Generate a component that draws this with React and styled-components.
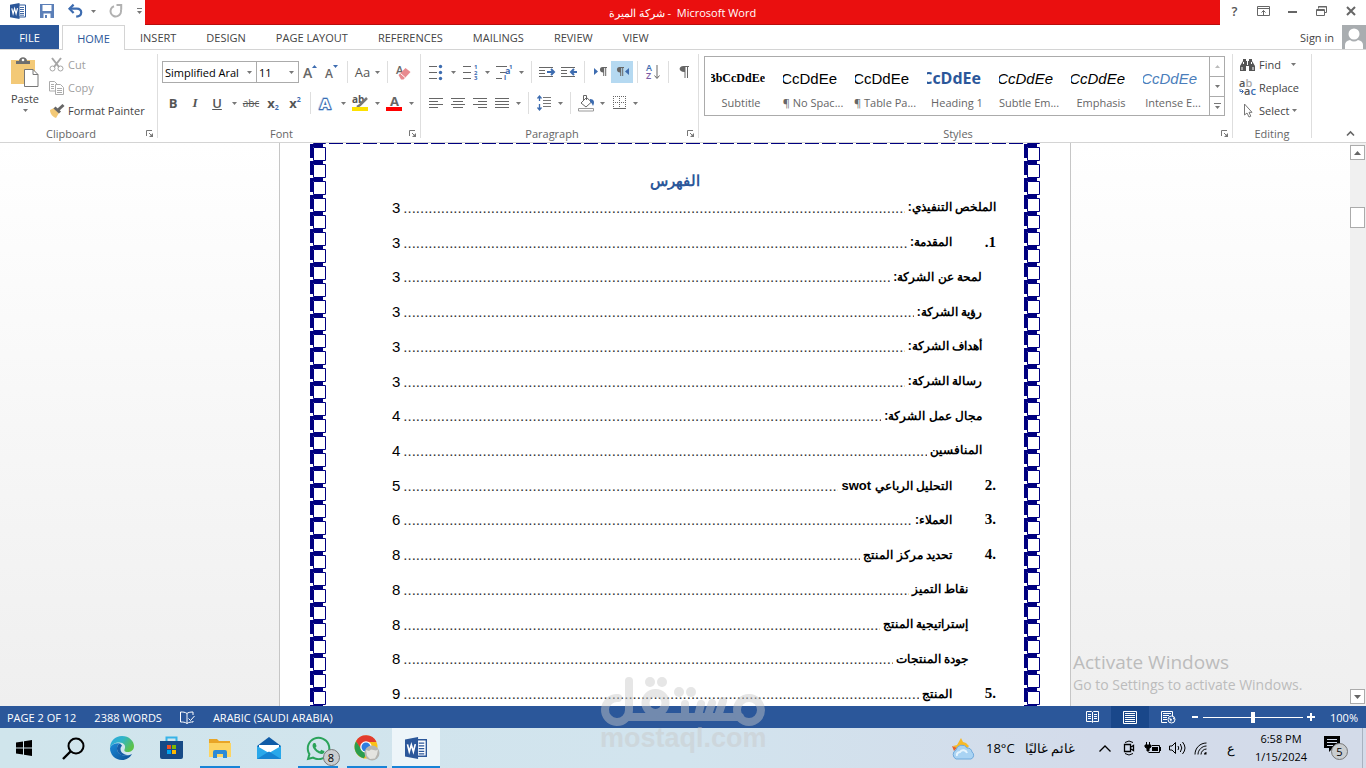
import React from 'react';
import styled, { createGlobalStyle, css } from 'styled-components';
import { FaWhatsapp } from 'react-icons/fa';

const toc = [
  { title: 'الملخص التنفيذي:', page: 3 },
  { num: '1', numDir: 'rtl', title: 'المقدمة:', page: 3 },
  { level: 1, title: 'لمحة عن الشركة:', page: 3 },
  { level: 1, title: 'رؤية الشركة:', page: 3 },
  { level: 1, title: 'أهداف الشركة:', page: 3 },
  { level: 1, title: 'رسالة الشركة:', page: 3 },
  { level: 1, title: 'مجال عمل الشركة:', page: 4 },
  { level: 1, title: 'المنافسين', page: 4 },
  { num: '2', title: 'التحليل الرباعي', latin: 'swot', page: 5 },
  { num: '3', title: 'العملاء:', page: 6 },
  { num: '4', title: 'تحديد مركز المنتج', page: 8 },
  { level: 2, title: 'نقاط التميز', page: 8 },
  { level: 2, title: 'إستراتيجية المنتج', page: 8 },
  { level: 2, title: 'جودة المنتجات', page: 8 },
  { num: '5', title: 'المنتج', page: 9 },
];

const styleList = [
  { name: 'Subtitle', look: 'serif' },
  { name: '¶ No Spac...', look: 'plain' },
  { name: '¶ Table Pa...', look: 'plain' },
  { name: 'Heading 1', look: 'heading' },
  { name: 'Subtle Em...', look: 'italic' },
  { name: 'Emphasis', look: 'italic' },
  { name: 'Intense E...', look: 'intense' },
];

const tabs = ['INSERT', 'DESIGN', 'PAGE LAYOUT', 'REFERENCES', 'MAILINGS', 'REVIEW', 'VIEW'];

const dots = '.'.repeat(160);

/* ---------- icons ---------- */

const Svg = ({ w = 16, h = 16, children, ...rest }) => (
  <svg width={w} height={h} viewBox={`0 0 ${w} ${h}`} fill="none" aria-hidden="true" {...rest}>
    {children}
  </svg>
);

const Down = ({ color = '#777' }) => (
  <Svg w={5} h={3}><path d="M0 0h5L2.5 3z" fill={color} /></Svg>
);

const WordIcon = ({ size = 16 }) => (
  <svg width={size} height={size} viewBox="0 0 16 16" aria-hidden="true">
    <path d="M8 2h7.5v12H8z" fill="#fff" stroke="#2b579a" />
    <path d="M10 4.5h4M10 6.5h4M10 8.5h4M10 10.5h4M10 12.2h4" stroke="#2b579a" strokeWidth=".9" />
    <path d="M0 1.8 9.5 0v16L0 14.2z" fill="#2b579a" />
    <path d="m1.8 5.4 1.3 5.3 1.5-5 1.5 5 1.4-5.5" fill="none" stroke="#fff" strokeWidth="1.2" />
  </svg>
);

const SaveIcon = () => (
  <Svg w={14} h={14}>
    <path d="M0 0h14v14H0z" fill="#5b7fb8" />
    <path d="M2.5 1h9v6h-9zM3.5 9.5h7V14h-7z" fill="#fff" />
    <path d="M5 11h2v3H5z" fill="#5b7fb8" />
  </Svg>
);

const UndoIcon = () => (
  <Svg w={15} h={14}>
    <path d="M1.5 4.7h7.3c6 0 6 7.4-.6 8" stroke="#3d6cb0" strokeWidth="2.2" />
    <path d="M5.6.6 1.5 4.7l4.1 4.2" stroke="#3d6cb0" strokeWidth="2.2" />
  </Svg>
);

const RedoIcon = () => (
  <Svg w={14} h={14}>
    <path d="M5 2.2a5.3 5.3 0 1 0 6.8 3.2" stroke="#b1b1b1" strokeWidth="2" />
    <path d="M7.5 1h4.7v4.8" stroke="#b1b1b1" strokeWidth="2" />
  </Svg>
);

const PasteIcon = () => (
  <Svg w={30} h={32}>
    <path d="M1 4h24v24H1z" fill="#f3c977" />
    <path d="M6 8V5h3c0-5 8-5 8 0h3v3z" fill="#6e6e6e" />
    <circle cx="13" cy="4" r="1.3" fill="#fff" />
    <path d="M14.5 13.5h8.500l5 5v12H14.500z" fill="#fff" stroke="#777" />
    <path d="M23 13.500v5h5" stroke="#777" />
  </Svg>
);

const CutIcon = () => (
  <Svg w={15} h={15}>
    <path d="m3 1 7 9M12 1 5 10" stroke="#a6a6a6" strokeWidth="2" />
    <circle cx="3.500" cy="11.500" r="2.500" stroke="#a6a6a6" />
    <circle cx="11.500" cy="11.500" r="2.500" stroke="#a6a6a6" />
  </Svg>
);

const CopyIcon = () => (
  <Svg w={15} h={14}>
    <path d="M.5.5h5l2.500 2.500v7H.5z" fill="#fff" stroke="#ababab" />
    <path d="M6.500 3.500h5l3 3v7h-8z" fill="#fff" stroke="#ababab" />
    <path d="M2 3.500h3M2 5.500h3M2 7.500h3M8 7.500h5M8 9.500h5M8 11.500h5" stroke="#ababab" />
  </Svg>
);

const BrushIcon = () => (
  <Svg w={16} h={14}>
    <path d="m1 6 4-2 5 5-3 5C4 13 1 10 1 6z" fill="#f3c977" />
    <path d="m5.500 3.500 5.500 5" stroke="#666" strokeWidth="3" />
    <path d="m9 6 5.500-5" stroke="#666" strokeWidth="3" />
  </Svg>
);

const GrowIcon = ({ shrink }) => (
  <Svg w={16} h={16}>
    <text x="1" y="14" fontFamily="Open Sans" fontSize={shrink ? 12 : 14} fontWeight="600" fill="#666">A</text>
    <path d={shrink ? 'M9 1h5l-2.500 3z' : 'M10 4h5l-2.500-3z'} fill="#3d6cb0" />
  </Svg>
);

const EraserIcon = () => (
  <Svg w={16} h={16}>
    <text x="1" y="10" fontFamily="Open Sans" fontSize="11" fontWeight="600" fill="#666">A</text>
    <path d="m3.500 11 7-7 5 4-7 7.500H6z" fill="#e88a8f" />
    <path d="m5.500 9.500 4.500 4" stroke="#fff" />
  </Svg>
);

const OutlineA = () => (
  <Svg w={16} h={16}>
    <text x="2" y="14" fontFamily="Open Sans" fontSize="15" fontWeight="600" fill="#9fc0e6" stroke="#bcd5f0" strokeWidth="4" strokeLinejoin="round">A</text>
    <text x="2" y="14" fontFamily="Open Sans" fontSize="15" fontWeight="700" fill="#fff" stroke="#3d6cb0" strokeWidth="2" paintOrder="stroke">A</text>
  </Svg>
);

const HighlightIcon = () => (
  <Svg w={17} h={17}>
    <text x="0" y="8" fontFamily="Open Sans" fontSize="10" fontWeight="700" fill="#555">ab</text>
    <path d="m15 3-7 7-3 2" stroke="#777" strokeWidth="2.500" />
    <path d="M0 12h16v4H0z" fill="#fde100" />
  </Svg>
);

const FontColorIcon = () => (
  <Svg w={16} h={17}>
    <text x="4" y="11" fontFamily="Open Sans" fontSize="13" fontWeight="700" fill="#666">A</text>
    <path d="M0 12h16v4H0z" fill="#f00" />
  </Svg>
);

const ListIcon = ({ kind }) => (
  <Svg w={16} h={16}>
    {kind === 'levels' ? (
      <path d="M0 2.500h11M4 8.500h6M0 14.500h6" stroke="#666" />
    ) : (
      <path d="M1 2.500h8M1 8.500h8M1 14.500h8" stroke="#666" />
    )}
    {kind === 'bullets' && (
      <g fill="#3d6cb0">
        <circle cx="12.500" cy="2.500" r="1.700" /><circle cx="12.500" cy="8.500" r="1.700" /><circle cx="12.500" cy="14.500" r="1.700" />
      </g>
    )}
    {kind === 'numbers' && (
      <g fontFamily="Open Sans" fontSize="6" fontWeight="700" fill="#3d6cb0">
        <text x="12" y="5">1</text><text x="12" y="11">2</text><text x="12" y="16">3</text>
      </g>
    )}
    {kind === 'levels' && (
      <g fontFamily="Open Sans" fontWeight="700" fill="#3d6cb0">
        <text x="13" y="5" fontSize="6">1</text><text x="9" y="10" fontSize="9">a</text><text x="8" y="16" fontSize="7">i</text>
      </g>
    )}
  </Svg>
);

const IndentIcon = ({ left }) => (
  <Svg w={16} h={12}>
    <path d="M0 1.500h14M0 4.500h6M0 7.500h6M0 10.500h14" stroke="#666" />
    <path d={left ? 'M16 6h-6m3-3-3 3 3 3' : 'M8 6h7m-3-3 3 3-3 3'} stroke="#3d6cb0" strokeWidth="2" />
  </Svg>
);

const DirIcon = ({ rtl }) => (
  <Svg w={13} h={10}>
    <path d={rtl ? 'M13 1v7L9 4.500z' : 'M0 1v7l4-3.500z'} fill="#3d6cb0" />
    <g transform={rtl ? 'translate(-5 0)' : ''}>
      <path d="M8.500 0H13v1h-.8v8h-1V1h-1v8h-1V5.500C5 5.500 5 0 8.500 0z" fill="#666" />
    </g>
  </Svg>
);

const SortIcon = () => (
  <Svg w={14} h={16}>
    <g fontFamily="Open Sans" fontSize="9" fontWeight="600">
      <text x="0" y="7" fill="#3d6cb0">A</text>
      <text x="0" y="15" fill="#7a5ba5">Z</text>
    </g>
    <path d="M11 1v13M8.500 11.500 11 14.500l2.500-3" stroke="#666" />
  </Svg>
);

const PilcrowIcon = () => (
  <Svg w={10} h={12}>
    <path d="M4.500 0H10v1H9v11H8V1H6.500v11h-1V6C-.8 6-.8 0 4.500 0z" fill="#666" />
  </Svg>
);

const alignPaths = {
  left: 'M0 .5h14M0 3.500h9M0 6.500h14M0 9.500h9',
  center: 'M0 .5h14M2 3.500h10M0 6.500h14M2 9.500h10',
  right: 'M0 .5h14M5 3.500h9M0 6.500h14M5 9.500h9',
  justify: 'M0 .5h14M0 3.500h14M0 6.500h14M0 9.500h14',
};

const AlignIcon = ({ kind }) => (
  <Svg w={14} h={10}><path d={alignPaths[kind]} stroke="#666" /></Svg>
);

const SpacingIcon = () => (
  <Svg w={15} h={16}>
    <path d="M6 2.500h8M6 5.500h8M6 8.500h8M6 11.500h8" stroke="#777" />
    <path d="M2.500 1v5M.5 3.500l2-2.500 2 2.500M2.500 9v6M.5 12.500l2 2.500 2-2.500" stroke="#3d6cb0" strokeWidth="1.300" />
  </Svg>
);

const ShadingIcon = () => (
  <Svg w={17} h={17}>
    <path d="M3 8 8.500 2.500l5 4.500L8 12z" fill="#fff" stroke="#666" />
    <path d="M5.500 6V.5h3V5" stroke="#666" />
    <path d="M12 4c4 0 5 3 3 7-1-2-1-3-3-4z" fill="#3d6cb0" />
    <path d="M.5 13.500h15v2.500H.5z" fill="#fff" stroke="#999" />
  </Svg>
);

const BordersIcon = () => (
  <Svg w={13} h={14}>
    <path d="M.5 0v12M12.500 0v12M6.500 0v12M0 .5h13M0 6.500h13" stroke="#666" strokeDasharray="1 1" />
    <path d="M0 12.500h13" stroke="#666" />
  </Svg>
);

const LauncherIcon = () => (
  <Svg w={7} h={7}>
    <path d="M.5 6V.5H6" stroke="#777" />
    <path d="m3 3 3 3" stroke="#777" />
    <path d="M7 3v4H3z" fill="#777" />
  </Svg>
);

const FindIcon = () => (
  <Svg w={15} h={14}>
    <path d="M3 1h3v2h3V1h3v2l3 5v5H9V8H6v5H0V8l3-5z" fill="#555" />
    <path d="M3.500 4v2M11.500 4v2M2 9v3M13 9v3M7.500 3v4" stroke="#fff" />
  </Svg>
);

const ReplaceIcon = () => (
  <Svg w={17} h={16}>
    <g fontFamily="Open Sans" fontSize="11" fontWeight="600">
      <text x="0" y="7" fill="#555">a<tspan fill="#aaa">b</tspan></text>
      <text x="5" y="15" fill="#555">a<tspan fill="#3d6cb0">c</tspan></text>
    </g>
    <path d="M1 9v2.500h3m-1.500-2 2 2-2 2" stroke="#3d6cb0" />
  </Svg>
);

const SelectIcon = () => (
  <Svg w={10} h={15}>
    <path d="M1.500 1v11l2.500-2 2 4 1.800-.8L6 9.300h3z" fill="#fff" stroke="#777" />
  </Svg>
);

/* ---------- application ---------- */

const Border = () => (
  <BorderStrip aria-hidden="true">
    <defs>
      <pattern id="film" width="16" height="17" patternUnits="userSpaceOnUse" y="1">
        <path d="M0 0h13v3H3v11H0z" fill="#000080" />
        <path d="M3.500 3.500h12v13h-12z" fill="#fff" stroke="#000080" />
      </pattern>
    </defs>
    <rect width="16" height="100%" fill="url(#film)" />
  </BorderStrip>
);

const TitleBar = () => (
  <StTitleBar>
    <QuickAccess>
      <ToolBtn $w={28} aria-label="Word"><WordIcon /></ToolBtn>
      <ToolBtn $w={30} aria-label="Save"><SaveIcon /></ToolBtn>
      <ToolBtn $w={26} aria-label="Undo"><UndoIcon /></ToolBtn>
      <ToolBtn $w={10} aria-label="Undo list"><Down /></ToolBtn>
      <ToolBtn $w={36} aria-label="Redo"><RedoIcon /></ToolBtn>
      <ToolBtn $w={11} aria-label="Customize toolbar">
        <Svg w={5} h={6}><path d="M0 .5h5" stroke="#777" /><path d="M0 3h5L2.500 6z" fill="#777" /></Svg>
      </ToolBtn>
    </QuickAccess>
    <DocTitle><bdi>شركة الميرة</bdi> -&nbsp; Microsoft Word</DocTitle>
    <WindowButtons>
      <ToolBtn $w={29} $mark aria-label="Help">?</ToolBtn>
      <ToolBtn $w={29} aria-label="Ribbon display">
        <Svg w={13} h={11}>
          <path d="M.5.5h12v9H.5zM.5 2.500h12" stroke="#666" />
          <path d="M6.500 9V4.500m-2 2 2-2 2 2" stroke="#666" />
        </Svg>
      </ToolBtn>
      <ToolBtn $w={29} aria-label="Minimize"><Svg w={9} h={4}><path d="M0 3h9" stroke="#666" strokeWidth="2" /></Svg></ToolBtn>
      <ToolBtn $w={29} aria-label="Restore">
        <Svg w={11} h={10}>
          <path d="M2.500 2.500v-2h8v6h-2M2 1h9" stroke="#666" />
          <path d="M.5 3.500h8v6h-8zM0 4.500h9" stroke="#666" />
        </Svg>
      </ToolBtn>
      <ToolBtn $w={29} aria-label="Close"><Svg w={10} h={10}><path d="m1 1 8 8m0-8L1 9" stroke="#666" strokeWidth="2" /></Svg></ToolBtn>
    </WindowButtons>
  </StTitleBar>
);

const ClipboardGroup = () => (
  <Group $w={157}>
    <ClipboardBody>
      <PasteBtn><PasteIcon />Paste<Down /></PasteBtn>
      <CommandList>
        <CommandBtn disabled><IconSlot><CutIcon /></IconSlot>Cut</CommandBtn>
        <CommandBtn disabled><IconSlot><CopyIcon /></IconSlot>Copy</CommandBtn>
        <CommandBtn><IconSlot><BrushIcon /></IconSlot>Format Painter</CommandBtn>
      </CommandList>
    </ClipboardBody>
    <GroupFoot name="Clipboard" />
  </Group>
);

const GroupFoot = ({ name, plain }) => (
  <GroupLabel>
    <span>{name}</span>
    {!plain && <Launcher aria-label={`${name} settings`}><LauncherIcon /></Launcher>}
  </GroupLabel>
);

const FontGroup = () => (
  <Group $w={262}>
    <ToolRows>
      <ToolRow>
        <Combo $w={95}>
          <select aria-label="Font"><option>Simplified Aral</option></select>
          <Down />
        </Combo>
        <Combo $w={43} $joined>
          <select aria-label="Font size"><option>11</option></select>
          <Down />
        </Combo>
        <ToolBtn aria-label="Grow font"><GrowIcon /></ToolBtn>
        <ToolBtn aria-label="Shrink font"><GrowIcon shrink /></ToolBtn>
        <Sep />
        <ToolBtn $w={31} $case aria-label="Change case">Aa<Down /></ToolBtn>
        <Sep />
        <ToolBtn aria-label="Clear formatting"><EraserIcon /></ToolBtn>
      </ToolRow>
      <ToolRow>
        <ToolBtn aria-label="Bold"><b>B</b></ToolBtn>
        <ToolBtn $serif aria-label="Italic"><i>I</i></ToolBtn>
        <ToolBtn $mark aria-label="Underline"><u>U</u></ToolBtn>
        <ToolBtn $w={12} aria-label="Underline style"><Down /></ToolBtn>
        <ToolBtn $small aria-label="Strikethrough"><s>abc</s></ToolBtn>
        <ToolBtn aria-label="Subscript"><b>x</b><sub>2</sub></ToolBtn>
        <ToolBtn aria-label="Superscript"><b>x</b><sup>2</sup></ToolBtn>
        <Sep />
        <ToolBtn aria-label="Text effects"><OutlineA /></ToolBtn>
        <ToolBtn $w={12} aria-label="Text effects list"><Down /></ToolBtn>
        <ToolBtn aria-label="Highlight"><HighlightIcon /></ToolBtn>
        <ToolBtn $w={12} aria-label="Highlight colors"><Down /></ToolBtn>
        <ToolBtn aria-label="Font color"><FontColorIcon /></ToolBtn>
        <ToolBtn $w={12} aria-label="Font colors"><Down /></ToolBtn>
      </ToolRow>
    </ToolRows>
    <GroupFoot name="Font" />
  </Group>
);

const ParagraphGroup = () => (
  <Group $w={277}>
    <ToolRows>
      <ToolRow>
        <ToolBtn aria-label="Bullets"><ListIcon kind="bullets" /></ToolBtn>
        <ToolBtn $w={12} aria-label="Bullet library"><Down /></ToolBtn>
        <ToolBtn aria-label="Numbering"><ListIcon kind="numbers" /></ToolBtn>
        <ToolBtn $w={12} aria-label="Numbering library"><Down /></ToolBtn>
        <ToolBtn aria-label="Multilevel list"><ListIcon kind="levels" /></ToolBtn>
        <ToolBtn $w={12} aria-label="List library"><Down /></ToolBtn>
        <Sep />
        <ToolBtn aria-label="Decrease indent"><IndentIcon /></ToolBtn>
        <ToolBtn aria-label="Increase indent"><IndentIcon left /></ToolBtn>
        <Sep />
        <ToolBtn aria-label="Left to right"><DirIcon /></ToolBtn>
        <ToolBtn $on aria-label="Right to left"><DirIcon rtl /></ToolBtn>
        <Sep />
        <ToolBtn aria-label="Sort"><SortIcon /></ToolBtn>
        <Sep />
        <ToolBtn aria-label="Show marks"><PilcrowIcon /></ToolBtn>
      </ToolRow>
      <ToolRow>
        <ToolBtn aria-label="Align left"><AlignIcon kind="left" /></ToolBtn>
        <ToolBtn aria-label="Center"><AlignIcon kind="center" /></ToolBtn>
        <ToolBtn aria-label="Align right"><AlignIcon kind="right" /></ToolBtn>
        <ToolBtn aria-label="Justify"><AlignIcon kind="justify" /></ToolBtn>
        <ToolBtn $w={11} aria-label="Justify list"><Down /></ToolBtn>
        <Sep />
        <ToolBtn aria-label="Line spacing"><SpacingIcon /></ToolBtn>
        <ToolBtn $w={11} aria-label="Line spacing list"><Down /></ToolBtn>
        <Sep />
        <ToolBtn aria-label="Shading"><ShadingIcon /></ToolBtn>
        <ToolBtn $w={11} aria-label="Shading colors"><Down /></ToolBtn>
        <ToolBtn aria-label="Borders"><BordersIcon /></ToolBtn>
        <ToolBtn $w={11} aria-label="Borders list"><Down /></ToolBtn>
      </ToolRow>
    </ToolRows>
    <GroupFoot name="Paragraph" />
  </Group>
);

const StylesGroup = () => (
  <Group>
    <Gallery>
      {styleList.map((s) => (
        <StyleItem key={s.name}>
          <Preview $look={s.look}><span>{s.look === 'serif' ? 'BbCcDdEe' : 'CcDdEe'}</span></Preview>
          <StyleName>{s.name}</StyleName>
        </StyleItem>
      ))}
      <GalleryNav>
        <button aria-label="Previous styles"><Svg w={5} h={3}><path d="M0 3h5L2.500 0z" fill="#bbb" /></Svg></button>
        <button aria-label="Next styles"><Down /></button>
        <button aria-label="More styles">
          <Svg w={7} h={6}><path d="M0 .5h7" stroke="#777" /><path d="M1 3h5L3.500 6z" fill="#777" /></Svg>
        </button>
      </GalleryNav>
    </Gallery>
    <GroupFoot name="Styles" />
  </Group>
);

const EditingGroup = () => (
  <Group $w={78}>
    <CommandList>
      <CommandBtn><IconSlot><FindIcon /></IconSlot>Find<FindCaret><Down /></FindCaret></CommandBtn>
      <CommandBtn><IconSlot><ReplaceIcon /></IconSlot>Replace</CommandBtn>
      <CommandBtn><IconSlot><SelectIcon /></IconSlot>Select<Down /></CommandBtn>
    </CommandList>
    <GroupFoot name="Editing" plain />
  </Group>
);

const Document = () => (
  <Workspace>
    <Canvas>
      <Page>
        <Border />
        <Sheet>
          <TocHeading>الفهرس</TocHeading>
          <TocList>
            {toc.map((row) => (
              <TocRow key={row.title} href="#toc" $level={row.level}>
                {row.num && <TocNum dir={row.numDir || 'ltr'}>{row.num}.</TocNum>}
                <TocTitle>{row.title}{row.latin && <Latin> {row.latin}</Latin>}</TocTitle>
                <Leader aria-hidden="true">{dots}</Leader>
                <PageNum>{row.page}</PageNum>
              </TocRow>
            ))}
          </TocList>
        </Sheet>
        <Border />
      </Page>
    </Canvas>
    <Scrollbar>
      <ScrollBtn aria-label="Scroll up"><Svg w={7} h={4}><path d="M0 4h7L3.500 0z" fill="#666" /></Svg></ScrollBtn>
      <Thumb />
      <ScrollBtn aria-label="Scroll down"><Svg w={7} h={4}><path d="M0 0h7L3.500 4z" fill="#666" /></Svg></ScrollBtn>
    </Scrollbar>
  </Workspace>
);

const StatusBar = () => (
  <StStatus>
    <span>PAGE 2 OF 12</span>
    <span>2388 WORDS</span>
    <Svg w={15} h={13}>
      <path d="M7 2.500C5 1 3 1 .5 1v10c2.500 0 4.500 0 6.500 1.500V2.500zm0 0C8 1.500 10 1 13 1v3M7 12.500c2-1.500 4-1.500 6-1.500v-1" stroke="#fff" />
      <path d="m8.500 7.500 2 2 4-4.500" stroke="#fff" />
    </Svg>
    <span>ARABIC (SAUDI ARABIA)</span>
    <ViewTools>
      <ViewBtn aria-label="Read mode">
        <Svg w={13} h={12}>
          <path d="M.5.5h5l1 1 1-1h5v10h-5l-1 1-1-1h-5zM6.500 1v10" stroke="#fff" />
          <path d="M2 3.500h3M2 5.500h3M2 7.500h3M8 3.500h3M8 5.500h3M8 7.500h3" stroke="#fff" />
        </Svg>
      </ViewBtn>
      <ViewBtn $on aria-label="Print layout">
        <Svg w={14} h={13}>
          <path d="M.5.5h13v12H.5zM2 2.500h10M2 4.500h10M2 6.500h10M2 8.500h10M2 10.500h10" stroke="#fff" />
        </Svg>
      </ViewBtn>
      <ViewBtn aria-label="Web layout">
        <Svg w={15} h={13}>
          <path d="M11.500 5V.5H.5v11H6M2 2.500h8M2 4.500h6M2 6.500h4M2 8.500h4" stroke="#fff" />
          <circle cx="10.500" cy="8.500" r="3.500" fill="#2b579a" stroke="#fff" />
          <path d="m8 7 3 1-1 3zM12 6l2 3-2-1z" fill="#fff" />
        </Svg>
      </ViewBtn>
      <ZoomBtn aria-label="Zoom out"><Svg w={6} h={2}><path d="M0 1h6" stroke="#fff" strokeWidth="2" /></Svg></ZoomBtn>
      <ZoomRange type="range" aria-label="Zoom" defaultValue="50" />
      <ZoomBtn aria-label="Zoom in"><Svg w={8} h={8}><path d="M0 4h8M4 0v8" stroke="#fff" strokeWidth="2" /></Svg></ZoomBtn>
      <ZoomValue>100%</ZoomValue>
    </ViewTools>
  </StStatus>
);

const Taskbar = () => (
  <StTaskbar>
    <TaskBtn aria-label="Start">
      <Svg w={16} h={16}><path d="M0 2.500 7 1.500V7.500H0zM8 1.300 16 0v7.500H8zM0 8.500h7v6L0 13.500zM8 8.500h8V16l-8-1.300z" fill="#000" /></Svg>
    </TaskBtn>
    <TaskBtn aria-label="Search">
      <Svg w={23} h={23}><circle cx="14" cy="9" r="7.500" stroke="#000" strokeWidth="2" /><path d="m8.500 14.500-7.500 7.500" stroke="#000" strokeWidth="2.400" /></Svg>
    </TaskBtn>
    <TaskBtn aria-label="Edge">
      <Svg w={24} h={24}>
        <defs>
          <linearGradient id="edgeTop" x1="0" y1="0" x2="1" y2=".5"><stop offset="0" stopColor="#2aa7e0" /><stop offset=".5" stopColor="#31b4c8" /><stop offset="1" stopColor="#5cc24a" /></linearGradient>
          <linearGradient id="edgeLow" x1="0" y1="0" x2="1" y2="1"><stop offset="0" stopColor="#1b8ad8" /><stop offset="1" stopColor="#0c4f94" /></linearGradient>
        </defs>
        <path d="M0 12C0 5 5 0 12 0s12 5 12 10c0 4-3 6-6.500 6-3 0-3.500-1.500-3-2.500 2-4-1-7-5-7C5 6.500 1.500 8.500 0 12z" fill="url(#edgeTop)" />
        <path d="M0 12c1.500-4 6-5.500 10-4.500C7 9 6.500 12 7.500 15c1.500 4.500 8 6 14.500 3-2 3.500-5.500 6-10 6C5 24 0 18.500 0 12z" fill="url(#edgeLow)" />
        <path d="M10 7.500C7 9 6.500 12 7.500 15c1.200 3.800 6 5.500 11 4.300-3.500-.3-8-2.300-8-6.300 0-2 1-2.500 1.500-3.500z" fill="#155ea8" />
      </Svg>
    </TaskBtn>
    <TaskBtn aria-label="Store">
      <Svg w={23} h={24}>
        <path d="M6.500 6V1.500h10V6" stroke="#37b3e8" strokeWidth="2" />
        <path d="M0 5h23v16q0 2-2 2H2q-2 0-2-2z" fill="#174a86" />
        <path d="M7 9h4v4H7z" fill="#f25022" /><path d="M12 9h4v4h-4z" fill="#7fba00" />
        <path d="M7 14h4v4H7z" fill="#00a4ef" /><path d="M12 14h4v4h-4z" fill="#ffb900" />
      </Svg>
    </TaskBtn>
    <TaskBtn $open aria-label="File Explorer">
      <Svg w={22} h={21}>
        <path d="M0 1h8l2 2h11v4H0z" fill="#e8a526" />
        <path d="M0 5h22v14H0z" fill="#fcd462" />
        <path d="M4 20v-6q0-2 2-2h10q2 0 2 2v6h-4v-4H8v4z" fill="#2c8ad6" />
      </Svg>
    </TaskBtn>
    <TaskBtn aria-label="Mail">
      <Svg w={24} h={23}>
        <path d="M0 9 12 0l12 9v2H0z" fill="#0f5ba7" />
        <path d="M2 8h20v9H2z" fill="#fff" />
        <path d="M0 9v13h24V9l-12 7z" fill="#29a8ea" />
        <path d="M0 22 12 14.500 24 22z" fill="#1684d2" />
      </Svg>
    </TaskBtn>
    <TaskBtn $open aria-label="WhatsApp">
      <AppIcon><FaWhatsapp size={27} color="#2ba35a" /><Badge>8</Badge></AppIcon>
    </TaskBtn>
    <TaskBtn $open aria-label="Chrome">
      <Svg w={26} h={26}>
        <circle cx="12" cy="12" r="11.500" fill="#fbc116" />
        <path d="M2 6.300A11.500 11.500 0 0 1 22.500 7H12L7 14.500z" fill="#e23b2e" />
        <path d="M2 6.300 8.500 16 13 17l-3 6.300A11.500 11.500 0 0 1 2 6.300z" fill="#2a9d4e" />
        <circle cx="12" cy="12" r="5.800" fill="#fff" />
        <circle cx="12" cy="12" r="4.500" fill="#2f7de1" />
        <circle cx="18" cy="18" r="7.500" fill="#b5b5b1" />
        <path d="m12 15 3 1 2-1.500 5 1 2-1-1 5-2 4-5 .5-3-3z" fill="#e4e4e0" />
      </Svg>
    </TaskBtn>
    <TaskBtn $open $active aria-label="Word"><WordIcon size={22} /></TaskBtn>
    <Tray>
      <Weather>
        <Svg w={25} h={23}>
          <path d="m10 1 2 4 3 1 3 3-4 5-7-1-5-4 4-1z" fill="#f6b928" />
          <path d="m1 9 5 2-3 3z" fill="#e8622c" />
          <path d="M5 22a5 5 0 0 1 0-9 6 6 0 0 1 11-2 5 5 0 0 1 5 4 4 4 0 0 1-1 7z" fill="#a9d3f3" stroke="#6fa9dc" />
          <path d="M6 19c-1-3 2-4 3-4 2-3 6-2 7 1" stroke="#e6f4fd" strokeWidth="2" />
        </Svg>
        <span>18°C</span>
        <span dir="rtl">غائم غاليًا</span>
      </Weather>
      <TrayBtn $w={26} aria-label="Hidden icons"><Svg w={12} h={7}><path d="m.5 6.500 5.500-5.500 5.500 5.500" stroke="#000" strokeWidth="1.300" /></Svg></TrayBtn>
      <TrayBtn $w={22} aria-label="Meet now">
        <Svg w={12} h={16}>
          <path d="M1.500 4.500h6v7h-6zM8 7l2.500-1.500v5L8 9" stroke="#000" strokeWidth="1.300" />
          <path d="M2 2.500q4-3 8 0M2 13.500q4 3 8 0" stroke="#000" />
        </Svg>
      </TrayBtn>
      <TrayBtn $w={25} aria-label="Battery">
        <Svg w={16} h={12}>
          <path d="M1.500 0v3M4.500 0v3M0 3h6v2L4 6.500V9H2V6.500L0 5z" stroke="#000" fill="#000" />
          <path d="M7 3.500h7.500v7h-11" stroke="#000" /><path d="M7 5h6v4H7z" fill="#000" /><path d="M15 5v4" stroke="#000" strokeWidth="2" />
        </Svg>
      </TrayBtn>
      <TrayBtn $w={25} aria-label="Volume">
        <Svg w={17} h={14}>
          <path d="M.5 5v4h2.500l3.500 3.500V1.500L3 5z" stroke="#000" />
          <path d="M9 5q1.500 2 0 4M11.300 3q3 4 0 8M13.500 1q5 6 0 12" stroke="#000" />
        </Svg>
      </TrayBtn>
      <TrayBtn $w={20} aria-label="Network">
        <Svg w={13} h={13}>
          <path d="M1 12.500C1 6 6 1 12.500 1M4 12.500C4 8 8 4 12.500 4M7 12.500C7 9.500 9.500 7 12.500 7" stroke="#000" />
          <path d="M10 12.500q0-2.500 2.500-2.500v2.500z" fill="#000" />
        </Svg>
      </TrayBtn>
      <TrayBtn $w={42} aria-label="Keyboard language">ع</TrayBtn>
      <Clock><time>6:58 PM</time><time>1/15/2024</time></Clock>
      <TrayBtn $w={52} aria-label="Notifications">
        <Note>
          <Svg w={24} h={24}>
            <path d="M0 0h16v12H9l-4 4v-4H0z" fill="#000" />
            <path d="M3 3.500h10M3 6.500h10M3 9.500h6" stroke="#d3dcec" />
          </Svg>
          <Badge>5</Badge>
        </Note>
      </TrayBtn>
      <ShowDesktop aria-label="Show desktop" />
    </Tray>
  </StTaskbar>
);

const Watermark = () => (
  <StWatermark>
    <svg width="166" height="50" viewBox="600 676 166 50" fill="none" stroke="#c8c8c8" strokeWidth="8" strokeLinecap="round" aria-hidden="true">
      <path d="M618 698a12 12 0 1 0 11 12V681M627 717h113" />
      <circle cx="655.500" cy="703" r="10" />
      <circle cx="749" cy="710" r="12" />
      <path d="M685 704v12M701 704l-3 12M712 703l-4 12M723 701l-5 15" />
      <g fill="#c8c8c8" stroke="none">
        <circle cx="650" cy="682" r="5" /><circle cx="662" cy="682" r="5" />
        <circle cx="679" cy="692" r="5" /><circle cx="691" cy="692" r="5" />
      </g>
    </svg>
    <span>mostaql.com</span>
  </StWatermark>
);

const App = () => {
  return (
    <>
      <GlobalStyle />
      <Window>
        <TitleBar />
        <TabBar>
          <FileTab>FILE</FileTab>
          <Tab $active>HOME</Tab>
          {tabs.map((tab) => <Tab key={tab}>{tab}</Tab>)}
          <SignIn href="#signin">
            Sign in
            <Svg w={24} h={24}>
              <path d="M0 0h24v24H0z" fill="#a9adb0" />
              <circle cx="12" cy="9" r="5.500" fill="#fff" />
              <path d="M3 24v-4q0-4 5-5 4 3 8 0 5 1 5 5v4z" fill="#fff" />
            </Svg>
          </SignIn>
        </TabBar>
        <Ribbon>
          <ClipboardGroup />
          <GroupLine />
          <FontGroup />
          <GroupLine />
          <ParagraphGroup />
          <GroupLine />
          <StylesGroup />
          <GroupLine />
          <EditingGroup />
          <GroupLine />
          <RibbonEnd>
            <Launcher aria-label="Collapse ribbon"><Svg w={9} h={5}><path d="m1 4.500 3.500-3.500L8 4.500" stroke="#666" strokeWidth="1.600" /></Svg></Launcher>
          </RibbonEnd>
        </Ribbon>
        <Document />
        <StatusBar />
        <Taskbar />
        <Activate>
          <h2>Activate Windows</h2>
          <p>Go to Settings to activate Windows.</p>
        </Activate>
        <Watermark />
      </Window>
    </>
  );
};

export default App;

const GlobalStyle = createGlobalStyle`
  * {
    box-sizing: border-box;
  }
  body {
    margin: 0;
    font-family: "Open Sans", "Liberation Sans", sans-serif;
    font-size: 11px;
    color: #444;
  }
  button, select, input {
    font: inherit;
    color: inherit;
    border: none;
    background: none;
    padding: 0;
    margin: 0;
  }
  a {
    color: inherit;
    text-decoration: none;
  }
  svg {
    display: block;
    flex: none;
    overflow: visible;
  }
`
const Window = styled.div`
  position: relative;
  display: flex;
  flex-direction: column;
  height: 100vh;
  overflow: hidden;
  background: #fff;
`
const StTitleBar = styled.header`
  display: flex;
  flex: none;
  height: 25px;
`
const QuickAccess = styled.div`
  display: flex;
  padding-left: 4px;
`
const DocTitle = styled.h1`
  flex: 1;
  margin: 0;
  font-size: 11px;
  font-weight: 400;
  line-height: 25px;
  text-align: center;
  white-space: pre;
  color: #fff;
  background: #ea0f0f;
  border-bottom: 1px solid #b90c0c;
`
const WindowButtons = styled.div`
  display: flex;
  padding-right: 1px;
`
const ToolBtn = styled.button`
  display: flex;
  align-items: center;
  justify-content: center;
  flex: none;
  width: ${(p) => p.$w || 22}px;
  height: 22px;
  font-size: ${(p) => (p.$small ? 10 : 13)}px;
  color: #555;
  background: ${(p) => (p.$on ? '#b5d9f1' : 'none')};
  ${(p) => p.$serif && css`font-family: "Liberation Serif", serif; font-weight: 700;`}
  ${(p) => p.$mark && css`font-weight: 600;`}
  ${(p) => p.$case && css`gap: 5px;`}
  sub, sup {
    font-size: 7px;
    font-weight: 700;
    line-height: 10px;
    color: #3d6cb0;
  }
  sub {
    margin-top: 9px;
  }
  sup {
    margin-bottom: 7px;
  }
`
const TabBar = styled.nav`
  display: flex;
  flex: none;
  height: 25px;
  border-bottom: 1px solid #d4d4d4;
`
const FileTab = styled.button`
  width: 59px;
  margin-right: 3px;
  color: #fff;
  background: #2b579a;
`
const Tab = styled.button`
  padding: 0 15px;
  white-space: nowrap;
  ${(p) => p.$active && css`
    width: 63px;
    padding: 0;
    height: 25px;
    color: #2b579a;
    background: #fff;
    border: 1px solid #d4d4d4;
    border-bottom: none;
  `}
`
const SignIn = styled.a`
  display: flex;
  align-items: center;
  gap: 8px;
  margin-left: auto;
`
const Ribbon = styled.div`
  display: flex;
  flex: none;
  height: 93px;
  border-bottom: 1px solid #d4d4d4;
`
const Group = styled.section`
  display: flex;
  flex-direction: column;
  justify-content: space-between;
  min-width: 0;
  padding-top: 3px;
  ${(p) => (p.$w ? css`width: ${p.$w}px; flex: none;` : css`flex: 1;`)}
`
const GroupLine = styled.div`
  flex: none;
  width: 1px;
  margin: 4px 0;
  background: #dedede;
`
const GroupLabel = styled.div`
  display: flex;
  align-items: center;
  height: 17px;
  color: #666;
  span {
    flex: 1;
    text-align: center;
  }
`
const Launcher = styled.button`
  display: flex;
  align-items: center;
  justify-content: center;
  width: 15px;
  height: 17px;
`
const RibbonEnd = styled.div`
  display: flex;
  flex: none;
  align-items: flex-end;
  justify-content: flex-end;
  width: 54px;
  padding-right: 8px;
`
const ClipboardBody = styled.div`
  display: flex;
  gap: 2px;
  padding-left: 4px;
`
const PasteBtn = styled.button`
  display: flex;
  flex-direction: column;
  align-items: center;
  width: 42px;
  gap: 3px;
  padding-top: 3px;
`
const CommandList = styled.div`
  display: flex;
  flex-direction: column;
`
const CommandBtn = styled.button`
  display: flex;
  align-items: center;
  height: 23px;
  gap: 3px;
  padding-left: 6px;
  white-space: nowrap;
  ${ClipboardBody} & {
    padding-left: 0;
  }
  &:disabled {
    color: #a0a0a0;
  }
`
const IconSlot = styled.span`
  display: flex;
  justify-content: center;
  width: 17px;
`
const FindCaret = styled.span`
  padding-left: 7px;
`
const ToolRows = styled.div`
  display: flex;
  flex-direction: column;
  gap: 9px;
  padding: 8px 0 0 4px;
`
const ToolRow = styled.div`
  display: flex;
`
const Sep = styled.span`
  flex: none;
  width: 1px;
  height: 22px;
  margin: 0 4px;
  background: #dedede;
`
const Combo = styled.label`
  display: flex;
  align-items: center;
  width: ${(p) => p.$w}px;
  height: 22px;
  padding: 0 4px 0 2px;
  border: 1px solid #ababab;
  margin-left: ${(p) => (p.$joined ? -1 : 0)}px;
  select {
    flex: 1;
    min-width: 0;
    font-size: 11px;
    color: #000;
    appearance: none;
    outline: none;
  }
`
const Gallery = styled.div`
  display: flex;
  height: 60px;
  margin: 3px 7px 0 5px;
  border: 1px solid #ababab;
`
const StyleItem = styled.button`
  display: flex;
  flex-direction: column;
  flex: 1;
  min-width: 0;
  align-items: center;
  padding-top: 8px;
  gap: 4px;
`
const looks = {
  serif: css`font: 700 12px "Liberation Serif", serif;`,
  plain: css`font-size: 15px;`,
  heading: css`font: 700 16px "Open Sans", sans-serif; color: #2b579a;`,
  italic: css`font-size: 15px; font-style: italic;`,
  intense: css`font-size: 15px; font-style: italic; color: #4a7ebb;`,
}
const Preview = styled.span`
  display: flex;
  align-items: center;
  justify-content: flex-end;
  width: 54px;
  height: 26px;
  margin-right: 6px;
  overflow: hidden;
  font-family: "Liberation Sans", sans-serif;
  color: #000;
  ${(p) => looks[p.$look]}
`
const StyleName = styled.span`
  line-height: 16px;
  white-space: nowrap;
  color: #666;
`
const GalleryNav = styled.div`
  display: grid;
  grid-template-rows: repeat(3, 1fr);
  width: 15px;
  border-left: 1px solid #ababab;
  button {
    display: flex;
    align-items: center;
    justify-content: center;
  }
  button + button {
    border-top: 1px solid #ababab;
  }
`
const Workspace = styled.main`
  display: flex;
  flex: 1;
  min-height: 0;
  background: linear-gradient(#fff, #efefef);
`
const Canvas = styled.div`
  display: flex;
  flex: 1;
  justify-content: center;
  min-width: 0;
  overflow: hidden;
`
const Page = styled.article`
  display: flex;
  flex: none;
  width: 792px;
  padding: 0 30px;
  background: #fff;
  border: solid #c6c6c6;
  border-width: 0 1px;
`
const BorderStrip = styled.svg`
  width: 16px;
  height: 100%;
  overflow: hidden;
`
const Sheet = styled.div`
  flex: 1;
  min-width: 0;
  padding-top: 28px;
  background: repeating-linear-gradient(90deg, #fff 0 3px, #000080 3px 17px) top / 100% 1px no-repeat;
`
const TocHeading = styled.h2`
  margin: 0;
  font: 700 15px "Liberation Sans", sans-serif;
  line-height: 19px;
  text-align: center;
  color: #2b579a;
`
const TocList = styled.nav`
  display: grid;
  grid-template-columns: minmax(0, 1fr);
  grid-auto-rows: 1fr;
  height: 521px;
  margin: 0 28px 0 66px;
  direction: rtl;
`
const TocRow = styled.a`
  display: flex;
  align-items: center;
  gap: 3px;
  padding-right: ${(p) => (p.$level || 0) * 14}px;
  color: #000;
`
const TocNum = styled.span`
  width: 41px;
  font: 700 15px "Liberation Serif", serif;
  text-align: right;
`
const TocTitle = styled.span`
  font: 700 12px "Liberation Sans", sans-serif;
  white-space: nowrap;
`
const Latin = styled.span`
  font-size: 13px;
`
const Leader = styled.span`
  flex: 1;
  min-width: 0;
  overflow: hidden;
  direction: ltr;
  font: 15px "Liberation Sans", sans-serif;
  white-space: nowrap;
  color: #333;
`
const PageNum = styled.span`
  font: 15px "Liberation Sans", sans-serif;
`
const Scrollbar = styled.div`
  display: flex;
  flex-direction: column;
  flex: none;
  width: 16px;
  padding: 2px 1px 2px 0;
  background: #f0f0f0;
`
const ScrollBtn = styled.button`
  display: flex;
  align-items: center;
  justify-content: center;
  height: 15px;
  background: #fff;
  border: 1px solid #ababab;
`
const Thumb = styled.div`
  height: 21px;
  margin: 47px 0 auto;
  background: #fff;
  border: 1px solid #ababab;
`
const StStatus = styled.footer`
  display: flex;
  flex: none;
  align-items: center;
  gap: 18px;
  height: 22px;
  padding: 0 8px 0 7px;
  color: #fff;
  background: #2b579a;
`
const ViewTools = styled.div`
  display: flex;
  align-items: center;
  margin-left: auto;
`
const ViewBtn = styled.button`
  display: flex;
  align-items: center;
  justify-content: center;
  width: 38px;
  height: 22px;
  background: ${(p) => (p.$on ? '#19478a' : 'none')};
`
const ZoomBtn = styled.button`
  display: flex;
  align-items: center;
  justify-content: center;
  width: 16px;
  height: 22px;
`
const ZoomRange = styled.input`
  width: 100px;
  height: 22px;
  appearance: none;
  background: linear-gradient(#fff, #fff) center / 100% 1px no-repeat;
  &::-webkit-slider-thumb {
    appearance: none;
    width: 4px;
    height: 11px;
    background: #fff;
  }
`
const ZoomValue = styled.span`
  width: 39px;
  text-align: right;
`
const StTaskbar = styled.footer`
  display: flex;
  flex: none;
  gap: 1px;
  height: 40px;
  color: #000;
  background: linear-gradient(90deg, #d0e5ec, #d2e4ee 50%, #d3dbea 80%, #d3dbe9);
`
const TaskBtn = styled.button`
  display: flex;
  align-items: center;
  justify-content: center;
  width: 48px;
  background: ${(p) => (p.$active ? '#edf5f9' : 'none')};
  ${(p) => p.$open && css`
    background-image: linear-gradient(#1883d7, #1883d7);
    background-position: bottom;
    background-size: ${p.$active ? 48 : 40}px 2px;
    background-repeat: no-repeat;
  `}
`
const AppIcon = styled.span`
  position: relative;
`
const Badge = styled.span`
  position: absolute;
  right: -8px;
  bottom: -4px;
  width: 17px;
  height: 17px;
  border: 1px solid #777;
  border-radius: 50%;
  font-size: 11px;
  line-height: 15px;
  text-align: center;
  color: #000;
  background: #c9cdd0;
`
const Tray = styled.div`
  display: flex;
  align-items: stretch;
  margin-left: auto;
`
const Weather = styled.div`
  display: flex;
  align-items: center;
  gap: 10px;
  padding-right: 17px;
  font-size: 13px;
`
const TrayBtn = styled.button`
  display: flex;
  align-items: center;
  justify-content: center;
  width: ${(p) => p.$w}px;
  font-size: 13px;
`
const Clock = styled.div`
  display: flex;
  flex-direction: column;
  justify-content: center;
  align-items: center;
  width: 58px;
  line-height: 18px;
`
const Note = styled.span`
  position: relative;
  ${Badge} {
    right: 0;
    bottom: 0;
  }
`
const ShowDesktop = styled.button`
  width: 4px;
  border-left: 1px solid #a9b2c0;
`
const Activate = styled.aside`
  position: absolute;
  right: 57px;
  bottom: 73px;
  width: 236px;
  white-space: nowrap;
  color: #bcbcbc;
  pointer-events: none;
  h2 {
    margin: 0;
    font-size: 19px;
    font-weight: 400;
    line-height: 26px;
  }
  p {
    margin: 0;
    font-size: 14px;
    line-height: 20px;
  }
`
const StWatermark = styled.div`
  position: absolute;
  left: 50%;
  bottom: 18px;
  width: 166px;
  margin-left: -83px;
  font: 700 27px "Liberation Sans", sans-serif;
  line-height: 24px;
  text-align: center;
  color: #c8c8c8;
  opacity: 0.45;
  pointer-events: none;
  span {
    display: block;
  }
`
